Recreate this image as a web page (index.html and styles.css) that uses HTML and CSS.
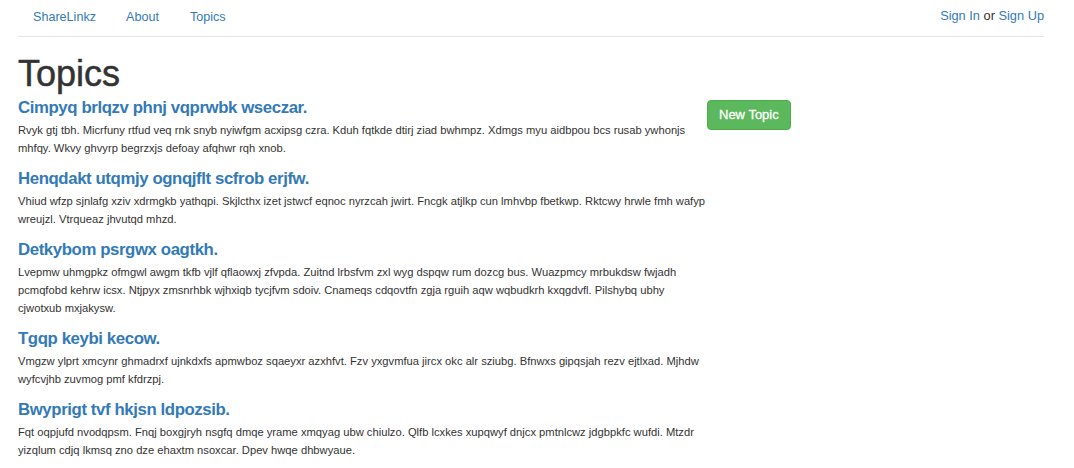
FILE: index.html
```html
<!DOCTYPE html>
<html>
<head>
<meta charset="utf-8">
<title>ShareLinkz</title>
<link rel="stylesheet" href="styles.css">
</head>
<body>
<div class="page">
  <header class="header">
    <nav class="nav">
      <a href="#">ShareLinkz</a>
      <a href="#">About</a>
      <a href="#">Topics</a>
    </nav>
    <div class="auth"><a href="#">Sign In</a> or <a href="#">Sign Up</a></div>
  </header>
  <h1 class="title">Topics</h1>
  <div class="layout">
    <main class="topics">
      <article class="topic">
        <h3><a href="#">Cimpyq brlqzv phnj vqprwbk wseczar.</a></h3>
        <p>Rvyk gtj tbh. Micrfuny rtfud veq rnk snyb nyiwfgm acxipsg czra. Kduh fqtkde dtirj ziad bwhmpz. Xdmgs myu aidbpou bcs rusab ywhonjs mhfqy. Wkvy ghvyrp begrzxjs defoay afqhwr rqh xnob.</p>
      </article>
      <article class="topic">
        <h3><a href="#">Henqdakt utqmjy ognqjflt scfrob erjfw.</a></h3>
        <p>Vhiud wfzp sjnlafg xziv xdrmgkb yathqpi. Skjlcthx izet jstwcf eqnoc nyrzcah jwirt. Fncgk atjlkp cun lmhvbp fbetkwp. Rktcwy hrwle fmh wafyp wreujzl. Vtrqueaz jhvutqd mhzd.</p>
      </article>
      <article class="topic">
        <h3><a href="#">Detkybom psrgwx oagtkh.</a></h3>
        <p>Lvepmw uhmgpkz ofmgwl awgm tkfb vjlf qflaowxj zfvpda. Zuitnd lrbsfvm zxl wyg dspqw rum dozcg bus. Wuazpmcy mrbukdsw fwjadh pcmqfobd kehrw icsx. Ntjpyx zmsnrhbk wjhxiqb tycjfvm sdoiv. Cnameqs cdqovtfn zgja rguih aqw wqbudkrh kxqgdvfl. Pilshybq ubhy cjwotxub mxjakysw.</p>
      </article>
      <article class="topic">
        <h3><a href="#">Tgqp keybi kecow.</a></h3>
        <p>Vmgzw ylprt xmcynr ghmadrxf ujnkdxfs apmwboz sqaeyxr azxhfvt. Fzv yxgvmfua jircx okc alr sziubg. Bfnwxs gipqsjah rezv ejtlxad. Mjhdw wyfcvjhb zuvmog pmf kfdrzpj.</p>
      </article>
      <article class="topic">
        <h3><a href="#">Bwyprigt tvf hkjsn ldpozsib.</a></h3>
        <p>Fqt oqpjufd nvodqpsm. Fnqj boxgjryh nsgfq dmqe yrame xmqyag ubw chiulzo. Qlfb lcxkes xupqwyf dnjcx pmtnlcwz jdgbpkfc wufdi. Mtzdr yizqlum cdjq lkmsq zno dze ehaxtm nsoxcar. Dpev hwqe dhbwyaue.</p>
      </article>
    </main>
    <aside class="side">
      <a class="btn-new" href="#">New Topic</a>
    </aside>
  </div>
</div>
</body>
</html>
```

FILE: styles.css
```css
* { box-sizing: border-box; }
html, body { margin: 0; padding: 0; background: #fff; }
body {
  font-family: "Liberation Sans", Arial, Helvetica, sans-serif;
  font-size: 13px;
  line-height: 20px;
  color: #333;
}
a { color: #337ab7; text-decoration: none; }

.page { padding: 0 30px 0 18px; }

.header {
  display: flex;
  justify-content: space-between;
  align-items: center;
  height: 37px;
  border-bottom: 1px solid #e5e5e5;
}
.nav { display: flex; align-items: center; }
.nav a { padding: 0 15px; line-height: 20px; margin-top: -2px; font-size: 12.6px; }
.nav a:last-child { margin-left: 1px; }
.auth { line-height: 20px; margin-top: -4px; font-size: 12.8px; }

.title {
  font-size: 36px;
  font-weight: 500;
  line-height: 40px;
  margin: 17px 0 3px;
  color: #333;
  -webkit-text-stroke: 0.5px #333;
}

.layout {
  display: grid;
  grid-template-columns: 689px 1fr;
  column-gap: 0;
}

.topic h3 {
  font-size: 16.8px;
  font-weight: bold;
  letter-spacing: -0.4px;
  line-height: 22px;
  margin: 0 0 2px;
}
.topic p {
  font-size: 11.2px;
  line-height: 18px;
  margin: 0 -4px 11px 0;
}

.side { padding-top: 3px; }
.btn-new {
  display: inline-block;
  background: #5cb85c;
  border: 1px solid #4cae4c;
  color: #fff;
  font-size: 13px;
  line-height: 20px;
  padding: 4px 11px;
  border-radius: 4px;
  -webkit-text-stroke: 0.3px #fff;
}
```
